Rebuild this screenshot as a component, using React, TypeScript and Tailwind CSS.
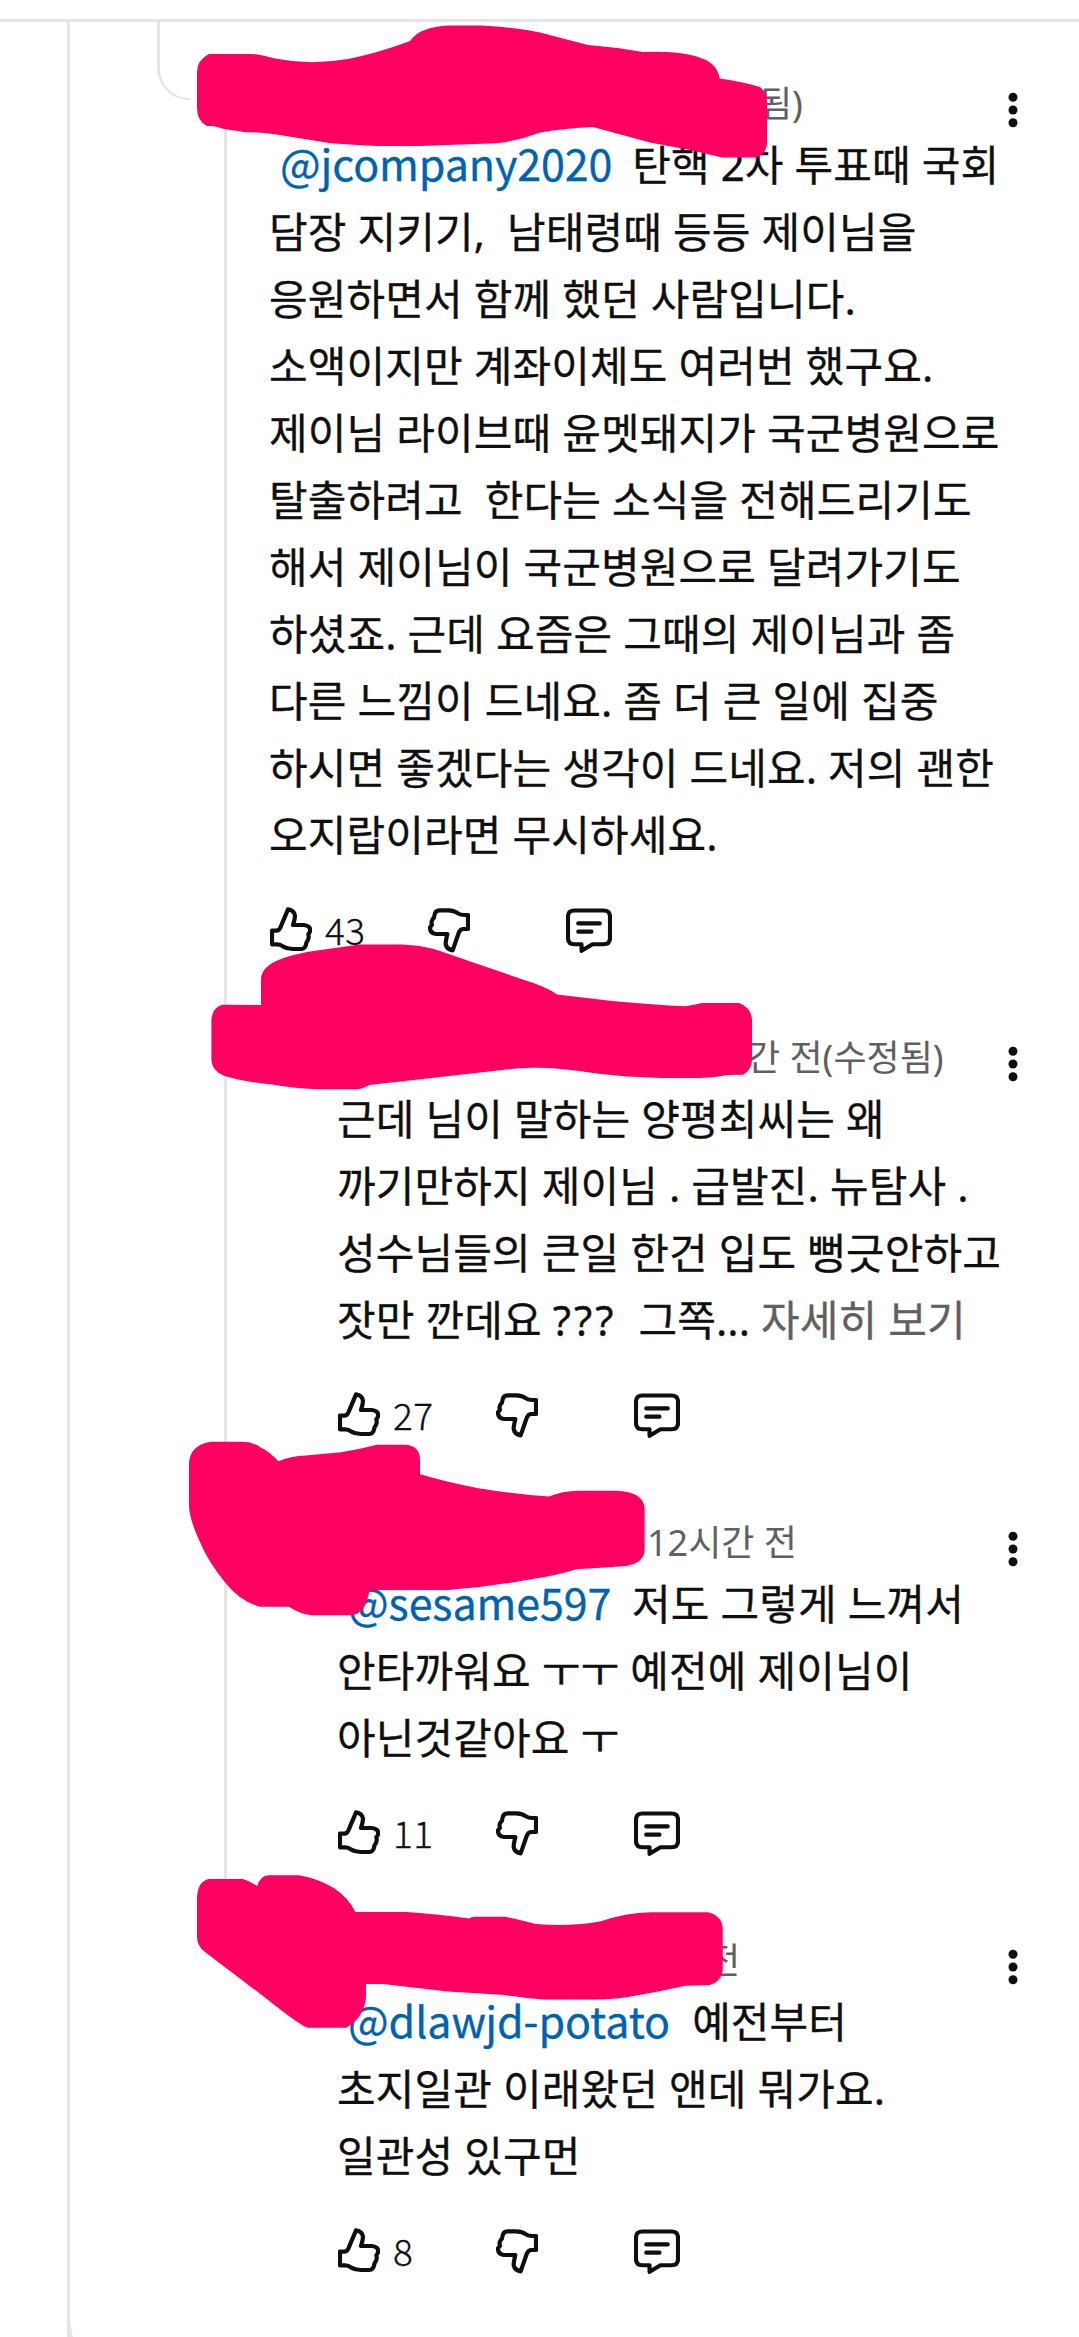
import type { ReactNode } from 'react'
import clsx from 'clsx'

function LikeIcon() {
  return (
    <svg viewBox="24 20 126 138" className="h-[46px] w-[42px] shrink-0" fill="none" stroke="currentColor" strokeWidth="12.5" strokeLinejoin="round">
      <path d="M30 91H43Q51 91 55 82L78 27Q97 30 99 46Q99 56 93 74H126Q147 76 144 94Q142 98 139 102Q142 112 137 121Q133 124 133 129Q130 145 118 146H92Q76 146 62 138Q55 131 42 132H30Z" />
    </svg>
  )
}

function DislikeIcon() {
  return (
    <svg viewBox="17 20 126 138" className="h-[46px] w-[42px] shrink-0" fill="none" stroke="currentColor" strokeWidth="12.5" strokeLinejoin="round">
      <path d="M137 44V86H122Q113 87 109 98L91 150Q73 147 70 131Q70 122 75 101H41Q22 98 23 81Q26 77 29 73Q25 64 32 55Q36 53 36 46Q38 30 52 30H78Q96 31 107 39Q114 44 126 44Z" />
    </svg>
  )
}

function ReplyIcon() {
  return (
    <svg viewBox="28 20 139 138" className="h-[46px] w-[46px] shrink-0" fill="none" stroke="currentColor" strokeWidth="12.5" strokeLinejoin="round" strokeLinecap="round">
      <path d="M53 30H142Q161 30 161 49V113Q161 132 142 132H108L75 152V132H53Q34 132 34 113V49Q34 30 53 30Z" />
      <path d="M65 69H130M65 94H105" />
    </svg>
  )
}

function MoreIcon() {
  return (
    <svg viewBox="0 0 10 36" className="mt-3 h-9 w-2.5 shrink-0" fill="currentColor">
      <circle cx="5" cy="5.3" r="4.5" />
      <circle cx="5" cy="18" r="4.5" />
      <circle cx="5" cy="30.7" r="4.5" />
    </svg>
  )
}

function Mention({ children }: { children: string }) {
  return <span className="font-['Noto_Sans_CJK_KR',sans-serif] text-[43px] leading-none tracking-[-0.1px] text-[#0063b1]">{children}</span>
}

type CommentProps = {
  time: string
  timeOffset: string
  likes: number
  nested?: boolean
  children: ReactNode
}

function Comment({ time, timeOffset, likes, nested, children }: CommentProps) {
  return (
    <article className={nested ? 'pl-[338px]' : 'pl-[270px]'}>
      <header className="flex h-14 items-center justify-between pr-[61px]">
        <span className={clsx('text-[36px] leading-[54px] text-[#606060]', timeOffset)}>{time}</span>
        <MoreIcon />
      </header>
      <div className="-mt-px -ml-px text-[42px] leading-[67px] tracking-[0.1px] whitespace-pre [-webkit-text-stroke:0.3px]">{children}</div>
      <footer className="mt-[39px] flex h-[46px] items-start">
        <div className="flex w-[157.6px] items-start">
          <LikeIcon />
          <span className="ml-[13px] font-['Noto_Sans_CJK_KR',sans-serif] text-[37px] leading-[44px] font-light tracking-[0.4px] [-webkit-text-stroke:0.3px]">{likes}</span>
        </div>
        <div className="w-[138.6px]">
          <DislikeIcon />
        </div>
        <ReplyIcon />
      </footer>
    </article>
  )
}

// marker strokes that hide the author names
const marks = [
  'M197 72Q197 60 209 54H253C263 55 268 57 275 58.500Q293 62 312 62.300Q330 62 348 59Q378 53 410 41Q420 26 451 25.500H482Q512 27 540 32.500L588 45Q615 47 643 52Q680 51 698 57Q718 63 719.500 78.500Q740 81 760 87Q767 92 767 103V142Q767 153 757 157.500H722L688 149.500Q668 146 650 142.500L593 127Q565 128 540 132.500Q518 141 496 143.300L420 146H377Q353 145 331 143.300L275 134.300Q261 132 246 132.300L224 129L213.500 126H207Q197 121 197 108Z',
  'M261 1005V980C261 964 281 957 310 951.500L360 944.500H395C415 944.500 428 947 440 951Q486 967 532 982.500Q550 989 557 994.500L612 1001Q655 1005 685 1006.200Q695 1005 702 1003H739Q751 1007 752 1020V1060Q751 1071 743 1074.700L727 1075Q714 1078 700 1078H662Q625 1077 597 1073.500Q555 1067 532 1067.700Q515 1068 498 1070.500L369 1085Q363 1089 356 1089.300H318Q290 1088 272 1084.500Q245 1082 224 1075.700Q212 1071 211.400 1060V1020Q212 1008 222 1004.700Z',
  'M189 1463Q190 1445 211 1441.700H243Q253 1442 260 1447Q270 1452 278.500 1461.300Q290 1456 306 1455.500L341 1452.300Q360 1449 377 1444.700H406Q420 1446 420 1460V1474.300Q450 1483 478.500 1488.300Q520 1495 549 1496.500Q562 1491 578 1490.700H616Q644 1492 644.600 1508.500V1550Q644 1563 626 1566Q600 1568 576 1569.300Q555 1576 532 1579Q490 1587 448 1590H369.500Q369 1595 367 1600Q362 1614 352 1615.300H312Q300 1614 289 1606.700H260Q241 1602 226 1583.500Q208 1562 199 1540Q189 1518 189 1505Z',
  'M197 1897Q198 1881 209 1879H243Q250 1881 257.300 1886Q260 1876 268 1875.300H299Q316 1878 333 1887.500Q349 1898 355.300 1912H406Q440 1914 469 1918.500Q471 1917 475 1916.700H505Q520 1920 536 1924Q570 1927 601 1921.300Q625 1913 651 1912.300H708Q722 1916 722.700 1928V1970Q722 1981 710 1985L685 1985.700Q662 1991 639 1995Q615 2000 589 1999.500H544Q524 1998 505 1995L448 1991.500L383 1984H366V1998Q363 2019 346 2027.700H308Q302 2027 264 1996.700L205 1952Q197 1946 197 1937Z',
]

export default function App() {
  return (
    <div className="relative h-[2337px] w-[1079px] overflow-hidden bg-white font-['Noto_Sans','Noto_Sans_CJK_KR',sans-serif] text-[#0f0f0f]">
      <div className="h-[22px] border-b-[3px] border-[#e5e5e5]" />
      <main className="flex flex-col gap-[77px] pt-[54px]">
        <Comment time="됨)" timeOffset="ml-[489px]" likes={43}>
          <p> <Mention>@jcompany2020</Mention><span className="tracking-[-1px]">{'  '}</span>탄핵 2차 투표때 국회</p>
          <p>담장 지키기,  남태령때 등등 제이님을</p>
          <p>응원하면서 함께 했던 사람입니다.</p>
          <p>소액이지만 계좌이체도 여러번 했구요.</p>
          <p>제이님 라이브때 윤멧돼지가 국군병원으로</p>
          <p>탈출하려고  한다는 소식을 전해드리기도</p>
          <p>해서 제이님이 국군병원으로 달려가기도</p>
          <p>하셨죠. 근데 요즘은 그때의 제이님과 좀</p>
          <p>다른 느낌이 드네요. 좀 더 큰 일에 집중</p>
          <p>하시면 좋겠다는 생각이 드네요. 저의 괜한</p>
          <p>오지랍이라면 무시하세요.</p>
        </Comment>
        <Comment time="간 전(수정됨)" timeOffset="ml-[409px]" likes={27} nested>
          <p>근데 님이 말하는 양평최씨는 왜</p>
          <p>까기만하지 제이님 . 급발진. 뉴탐사 .</p>
          <p>성수님들의 큰일 한건 입도 뻥긋안하고</p>
          <p>잣만 깐데요 <span className="tracking-[3px]">???</span>  그쪽... <span className="text-[#606060]">자세히 보기</span></p>
        </Comment>
        <Comment time="12시간 전" timeOffset="ml-[309px]" likes={11} nested>
          <p> <Mention>@sesame597</Mention><span className="tracking-[-0.5px]">{'  '}</span>저도 그렇게 느껴서</p>
          <p>안타까워요 ㅜㅜ 예전에 제이님이</p>
          <p>아닌것같아요 ㅜ</p>
        </Comment>
        <Comment time="전" timeOffset="ml-[369px]" likes={8} nested>
          <p> <Mention>@dlawjd-potato</Mention>{'  '}예전부터</p>
          <p>초지일관 이래왔던 앤데 뭐가요.</p>
          <p>일관성 있구먼</p>
        </Comment>
      </main>

      {/* thread lines */}
      <div className="absolute top-[22px] bottom-0 left-[67px] w-[3px] bg-[#e5e5e5]" />
      <svg viewBox="0 0 6 17" className="absolute bottom-0 left-[67px] h-[17px] w-1.5" fill="#e5e5e5">
        <path d="M0 0H3Q4 10 6 17H0Z" />
      </svg>
      <div className="absolute top-[22px] left-[157px] h-[78px] w-[33px] rounded-bl-[32px] border-b-[2.5px] border-l-[3px] border-[#e5e5e5]" />
      <div className="absolute top-[130px] left-[224px] h-[1755px] w-[3px] bg-[#e5e5e5]" />

      <svg viewBox="0 0 1079 2337" className="absolute inset-0 h-[2337px] w-[1079px]" fill="#ff0060">
        {marks.map((d) => (
          <path key={d} d={d} />
        ))}
      </svg>
    </div>
  )
}
